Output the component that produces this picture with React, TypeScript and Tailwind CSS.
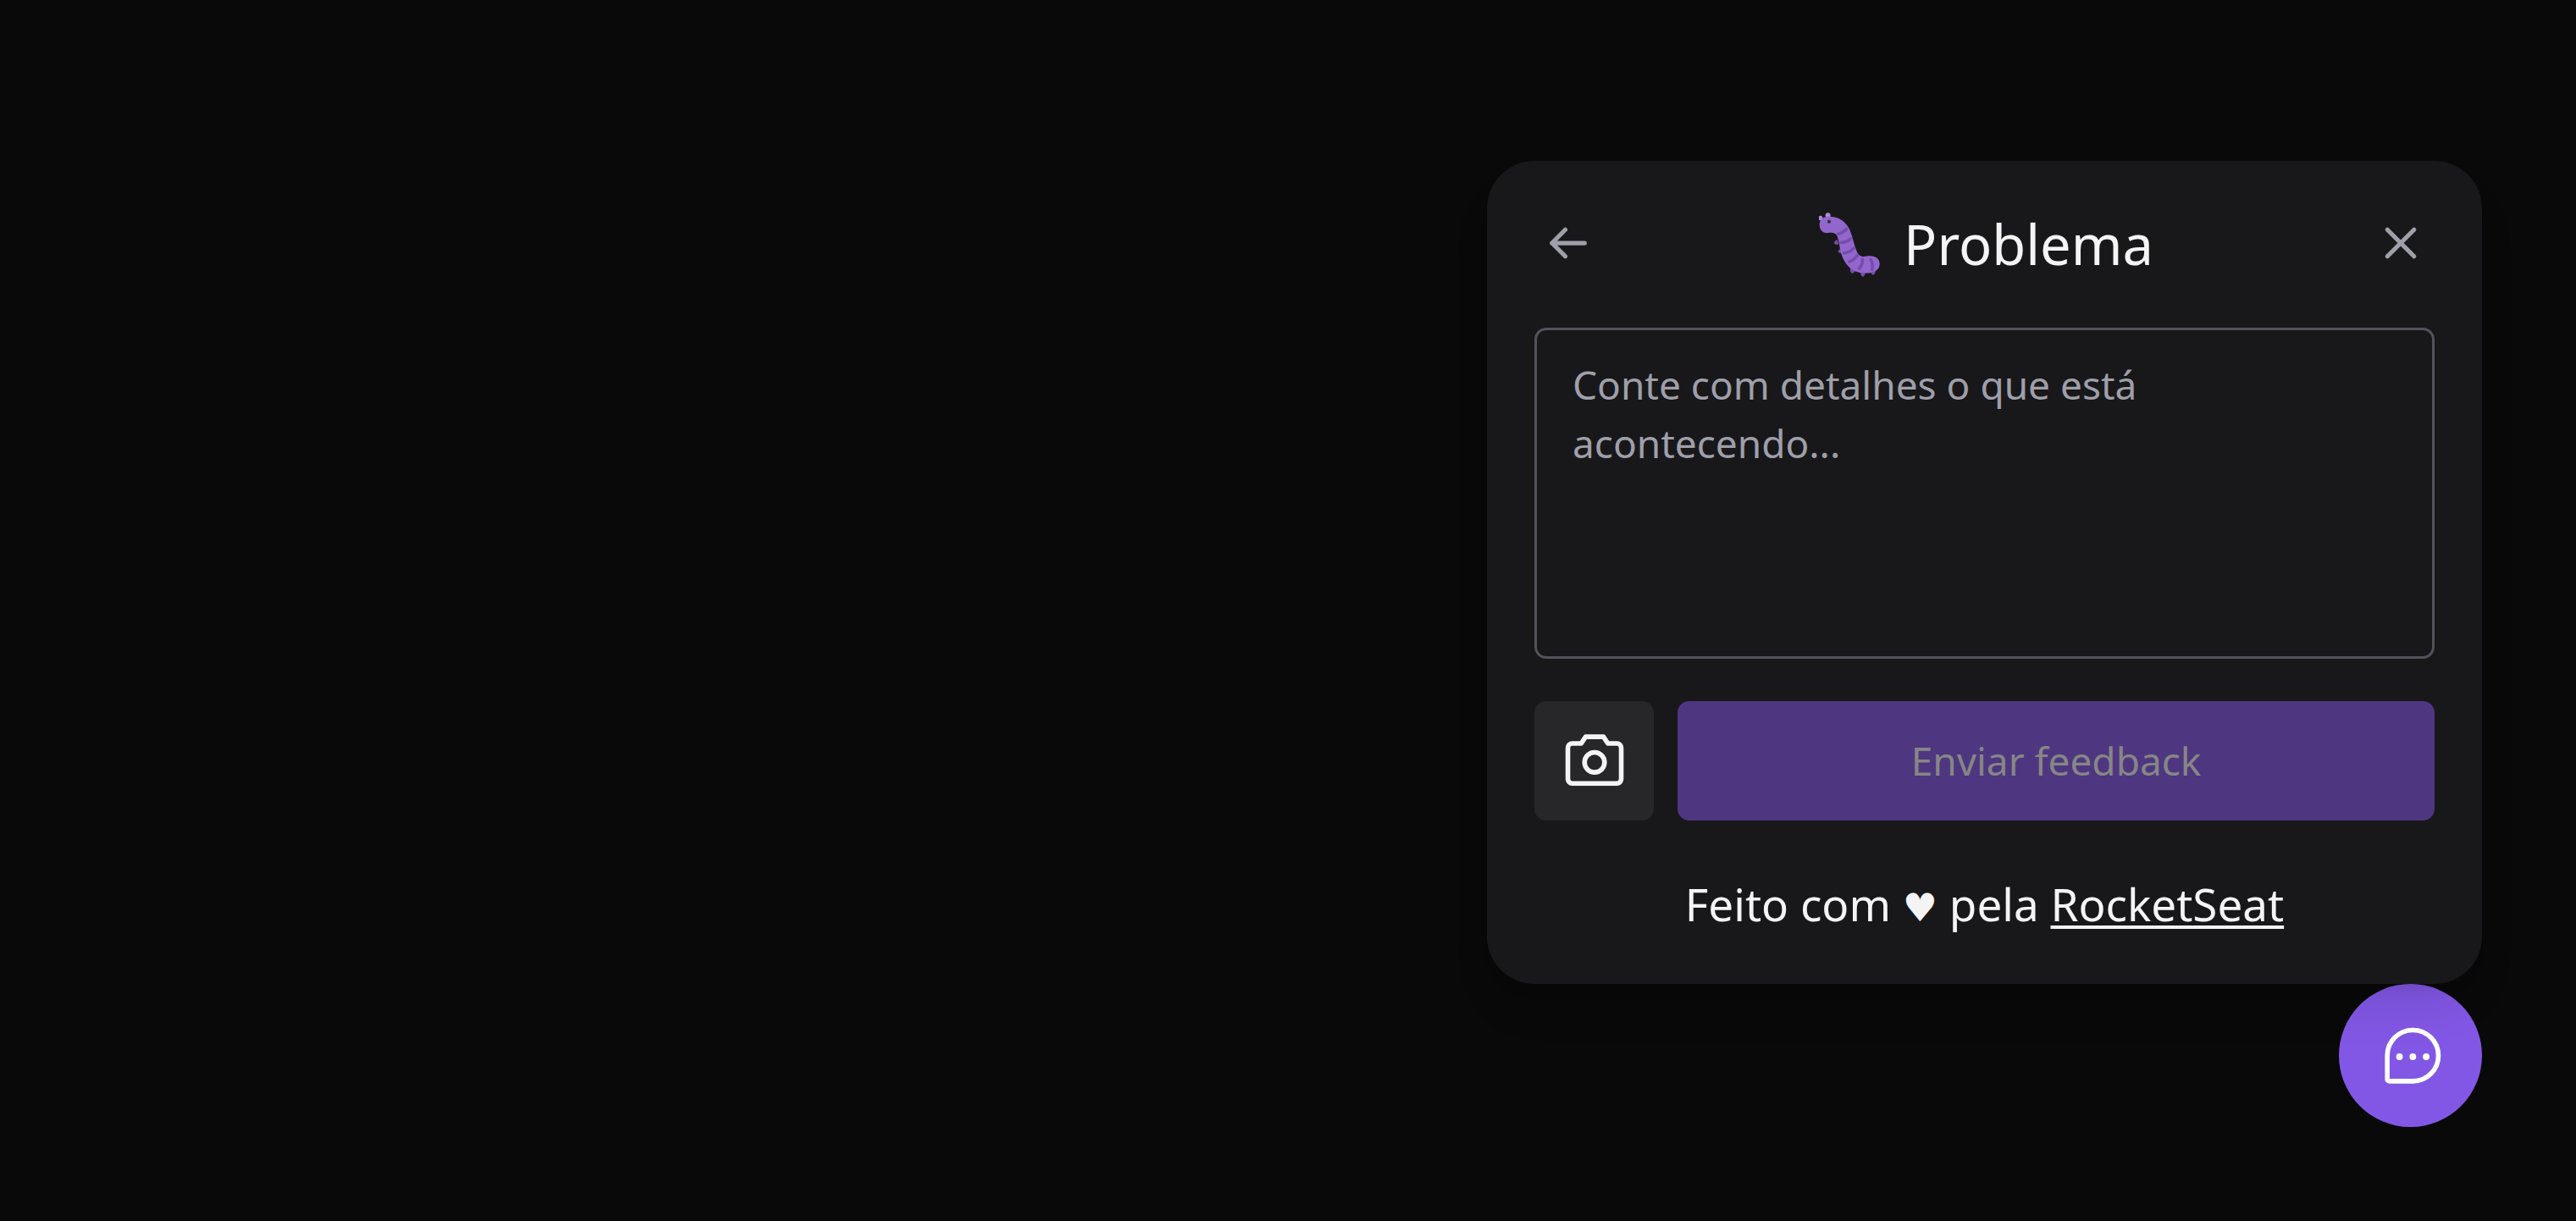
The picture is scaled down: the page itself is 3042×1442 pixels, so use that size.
import React from "react";

const stroke = {
  fill: "none",
  stroke: "currentColor",
  strokeLinecap: "round" as const,
  strokeLinejoin: "round" as const,
};

function ArrowLeftIcon() {
  return (
    <svg viewBox="0 0 256 256" className="size-14" strokeWidth={24} {...stroke} aria-hidden="true">
      <path d="M216 128H40M112 56l-72 72 72 72" />
    </svg>
  );
}

function CloseIcon() {
  return (
    <svg viewBox="0 0 256 256" className="size-14" strokeWidth={24} {...stroke} aria-hidden="true">
      <path d="M200 56 56 200M200 200 56 56" />
    </svg>
  );
}

function CameraIcon() {
  return (
    <svg viewBox="0 0 256 256" className="size-21" strokeWidth={17} {...stroke} aria-hidden="true">
      <path d="M208 208H48a16 16 0 0 1-16-16V80a16 16 0 0 1 16-16h32l16-24h64l16 24h32a16 16 0 0 1 16 16v112a16 16 0 0 1-16 16Z" />
      <circle cx="128" cy="132" r="36" />
    </svg>
  );
}

function ChatIcon() {
  return (
    <svg viewBox="0 0 256 256" className="size-21" strokeWidth={17} {...stroke} aria-hidden="true">
      <path d="M132 216H47.700a7.600 7.600 0 0 1-7.700-7.700V124a92 92 0 0 1 184 0 92 92 0 0 1-92 92Z" />
      <g fill="currentColor" stroke="none">
        <circle cx="84" cy="128" r="12" />
        <circle cx="132" cy="128" r="12" />
        <circle cx="180" cy="128" r="12" />
      </g>
    </svg>
  );
}

function CaterpillarIcon() {
  return (
    <svg viewBox="84 60 217 234" className="h-[78px] w-[72px]" role="img" aria-label="Lagarta">
      <g fill="#744EAA">
        <path d="M150 159c-6 3-12 6-12 11 1 6 9 7 16 6ZM162 191c-6 3-11 7-10 11 2 5 9 6 16 5Z" />
        <path d="M195 258c-1 9 1 18 6 21 5 1 11-5 15-12ZM230 269c1 11 5 21 10 22 5 0 9-10 11-19ZM268 270c1 9 4 15 9 15 5-1 8-9 9-18Z" />
      </g>
      <g stroke="#9266CC" strokeWidth="8" strokeLinecap="round">
        <path d="M90 82l8 12M116 72l-2 12" />
      </g>
      <circle cx="89" cy="82" r="8" fill="#AA8DD8" />
      <circle cx="116" cy="72" r="9" fill="#AA8DD8" />
      <path
        fill="#9266CC"
        d="M86 106c0-17 12-29 30-29 34-1 61 13 77 46 11 24 15 54 26 79 8 18 21 19 35 16 27-4 46 6 46 28 0 20-20 32-49 32-41 0-67-19-83-56-12-29-11-62-21-79-7-11-18-10-30-8-18 2-31-10-31-29Z"
      />
      <g fill="none" stroke="#744EAA" strokeWidth="11" strokeLinecap="round">
        <path d="M153 139c12-3 22-9 29-18" />
        <path d="M163 169c13 0 24-5 33-13" />
        <path d="M173 207c14-2 26-8 35-17" />
        <path d="M192 237c12-4 22-12 28-21" />
        <path d="M227 262c8-9 12-21 12-33" />
        <path d="M273 266c3-13 1-26-5-36" />
      </g>
      <circle cx="120" cy="95" r="6" fill="#292F33" />
    </svg>
  );
}

export default function App() {
  return (
    <main className="flex min-h-screen flex-col items-end justify-end bg-[#09090a] p-[111px] font-['Noto_Sans','Open_Sans',sans-serif] text-zinc-100">
      <section
        aria-labelledby="feedback-title"
        className="relative z-10 flex w-[1175px] max-w-full flex-col rounded-[56px] bg-[#18181b] p-14 shadow-[0_35px_52px_-10px_rgba(0,0,0,0.1),0_14px_21px_-14px_rgba(0,0,0,0.1)]"
      >
        <header className="flex items-start justify-between px-3">
          <button type="button" aria-label="Voltar" className="mt-[13px] text-zinc-400">
            <ArrowLeftIcon />
          </button>
          <h1 id="feedback-title" className="flex items-center gap-7 pl-1 text-[65px] leading-[85px]">
            <CaterpillarIcon />
            <span>Problema</span>
          </h1>
          <button type="button" aria-label="Fechar" className="mt-[13px] text-zinc-400">
            <CloseIcon />
          </button>
        </header>

        <form className="my-14 flex flex-col gap-[50px]" onSubmit={(e) => e.preventDefault()}>
          <textarea
            aria-label="Detalhes do problema"
            placeholder="Conte com detalhes o que está acontecendo..."
            className="block h-[391px] w-full resize-none rounded-[14px] border-[3px] border-zinc-600 bg-transparent px-[42px] py-[30px] text-[46px] leading-[69px] placeholder:text-zinc-400"
          />
          <div className="flex gap-7">
            <button
              type="button"
              aria-label="Tirar captura de tela"
              className="flex size-[141px] shrink-0 items-center justify-center rounded-[14px] bg-[#27272a]"
            >
              <CameraIcon />
            </button>
            <button
              type="submit"
              disabled
              className="flex-1 rounded-[14px] bg-[#4e3780] text-[46px] leading-[69px] text-[#868686]"
            >
              Enviar feedback
            </button>
          </div>
        </form>

        <footer className="pt-1 text-center text-[53px] leading-[77px]">
          Feito com <span className="font-['DejaVu_Sans',sans-serif] text-[46px] leading-none">♥</span> pela{" "}
          <a href="#rocketseat" className="underline decoration-[4px] underline-offset-[5px]">
            RocketSeat
          </a>
        </footer>
      </section>

      <button
        type="button"
        aria-label="Abrir feedback"
        className="flex size-[169px] items-center justify-center rounded-full bg-[#8257e5] pl-[3px] pt-[3px] text-white"
      >
        <ChatIcon />
      </button>
    </main>
  );
}
